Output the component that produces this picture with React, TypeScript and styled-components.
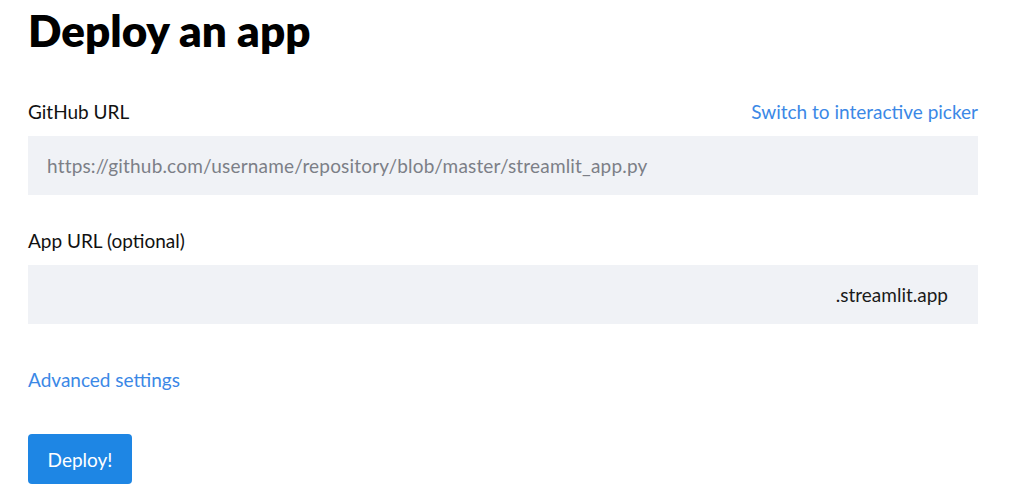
import styled, { createGlobalStyle } from 'styled-components';

const GlobalStyle = createGlobalStyle`
  body {
    margin: 0;
    background: #ffffff;
    font-family: Lato, "Noto Sans", sans-serif;
    color: #262730;
  }
`;

/* -------- Styled Components -------- */
const Page = styled.div`
  width: 950px;
  padding: 0 34px 0 28px;
  display: flex;
  flex-direction: column;
`;

const Title = styled.h1`
  margin: 3px 0 0 0;
  font-size: 44px;
  line-height: 54px;
  font-weight: 800;
  color: #000000;
`;

const Field = styled.div<{ $top: number }>`
  display: flex;
  flex-direction: column;
  margin-top: ${props => props.$top}px;
`;

const LabelRow = styled.div`
  display: flex;
  justify-content: space-between;
  align-items: center;
  height: 26px;
  margin-bottom: 12px;
`;

const Label = styled.label`
  font-size: 19px;
  color: #111111;
`;

const Link = styled.a`
  font-size: 19px;
  color: #3b88e6;
  text-decoration: none;
  cursor: pointer;
`;

const InputBox = styled.div`
  height: 59px;
  background: #f0f2f6;
  display: flex;
  align-items: center;
  padding: 0 30px 0 19px;
  box-sizing: border-box;
`;

const Input = styled.input`
  flex: 1;
  border: none;
  outline: none;
  background: transparent;
  font-family: inherit;
  font-size: 19px;
  letter-spacing: 0.18px;
  color: #262730;
  padding: 0;
  &::placeholder {
    color: #7c7f87;
  }
`;

const Suffix = styled.span`
  font-size: 19px;
  color: #1a1a1a;
`;

const AdvancedLink = styled(Link)`
  margin-top: 44px;
  align-self: flex-start;
`;

const DeployButton = styled.button`
  margin-top: 43px;
  align-self: flex-start;
  width: 104px;
  height: 50px;
  border: none;
  border-radius: 4px;
  background: #1e86e4;
  color: #ffffff;
  font-family: inherit;
  font-size: 19px;
  cursor: pointer;
`;

function App() {
  return (
    <>
      <GlobalStyle />
      <Page>
        <Title>Deploy an app</Title>
        <Field $top={41}>
          <LabelRow>
            <Label>GitHub URL</Label>
            <Link>Switch to interactive picker</Link>
          </LabelRow>
          <InputBox>
            <Input placeholder="https://github.com/username/repository/blob/master/streamlit_app.py" />
          </InputBox>
        </Field>
        <Field $top={32}>
          <LabelRow>
            <Label>App URL (optional)</Label>
          </LabelRow>
          <InputBox>
            <Input />
            <Suffix>.streamlit.app</Suffix>
          </InputBox>
        </Field>
        <AdvancedLink>Advanced settings</AdvancedLink>
        <DeployButton>Deploy!</DeployButton>
      </Page>
    </>
  );
}

export default App;
